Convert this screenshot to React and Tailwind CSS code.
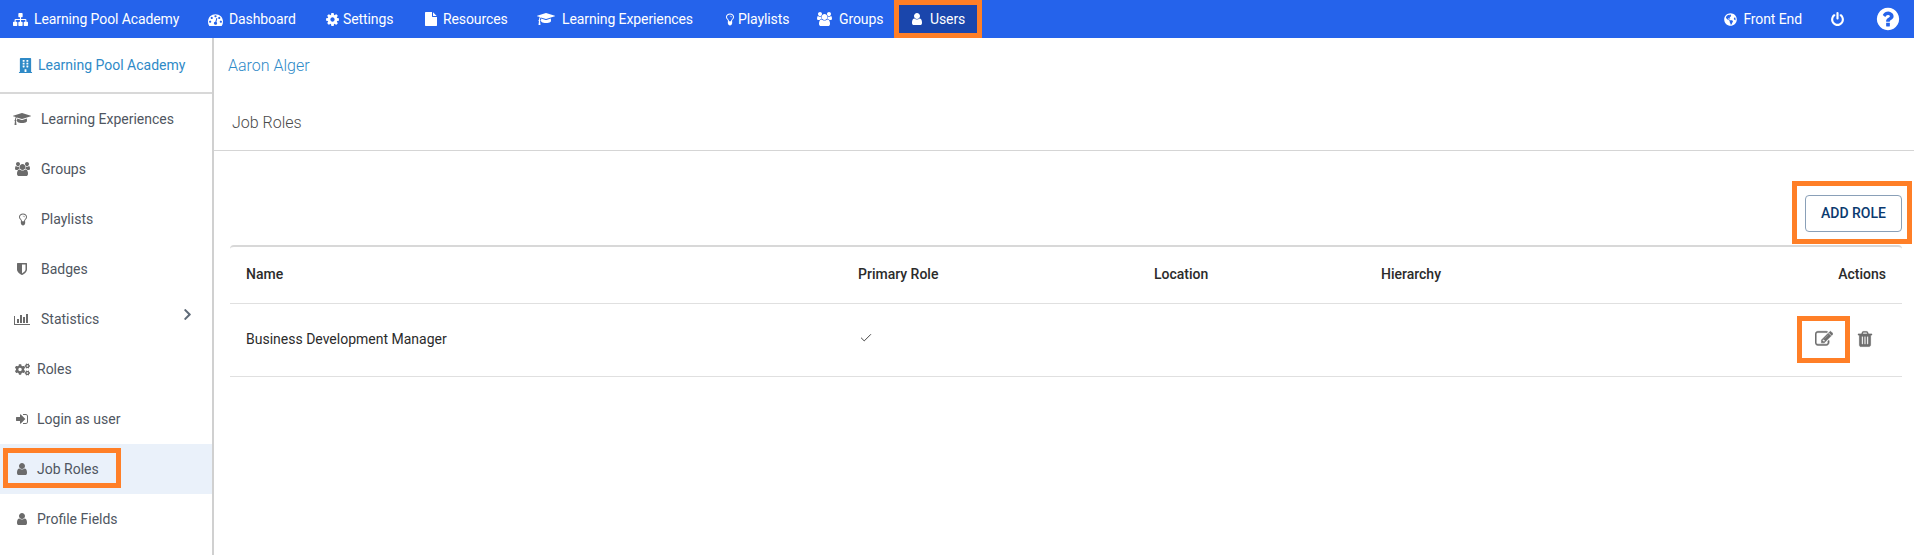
import { FaGlobeAmericas, FaBuilding, FaCogs, FaChevronRight } from "react-icons/fa";
import { LuCheck } from "react-icons/lu";

// old style solid glyphs, drawn on a 1792 tall box
const glyphs = {
  sitemap: [1792, "M1792 1248v320q0 40-28 68t-68 28h-320q-40 0-68-28t-28-68v-320q0-40 28-68t68-28h96v-192h-512v192h96q40 0 68 28t28 68v320q0 40-28 68t-68 28h-320q-40 0-68-28t-28-68v-320q0-40 28-68t68-28h96v-192h-512v192h96q40 0 68 28t28 68v320q0 40-28 68t-68 28h-320q-40 0-68-28t-28-68v-320q0-40 28-68t68-28h96v-192q0-52 38-90t90-38h512v-192h-96q-40 0-68-28t-28-68v-320q0-40 28-68t68-28h320q40 0 68 28t28 68v320q0 40-28 68t-68 28h-96v192h512q52 0 90 38t38 90v192h96q40 0 68 28t28 68z"],
  dashboard: [1792, "M384 1152q0-53-37.5-90.5t-90.5-37.5-90.5 37.5-37.5 90.5 37.5 90.5 90.5 37.5 90.5-37.5 37.5-90.5zm192-448q0-53-37.5-90.5t-90.5-37.5-90.5 37.5-37.5 90.5 37.5 90.5 90.5 37.5 90.5-37.5 37.5-90.5zm428 481l101-382q6-26-7.5-48.5t-38.5-29.5-48 6.5-30 39.5l-101 382q-60 5-107 43.5t-63 98.5q-20 77 20 146t117 89 146-20 89-117q16-60-6-117t-72-91zm660-33q0-53-37.5-90.5t-90.5-37.5-90.5 37.5-37.5 90.5 37.5 90.5 90.5 37.5 90.5-37.5 37.5-90.5zm-640-640q0-53-37.5-90.5t-90.5-37.5-90.5 37.5-37.5 90.5 37.5 90.5 90.5 37.5 90.5-37.5 37.5-90.5zm448 192q0-53-37.5-90.5t-90.5-37.5-90.5 37.5-37.5 90.5 37.5 90.5 90.5 37.5 90.5-37.5 37.5-90.5zm320 448q0 261-141 483-19 29-54 29h-1402q-35 0-54-29-141-221-141-483 0-182 71-348t191-286 286-191 348-71 348 71 286 191 191 286 71 348z"],
  cog: [1792, "M1152 896q0-106-75-181t-181-75-181 75-75 181 75 181 181 75 181-75 75-181zm512-109v222q0 12-8 23t-20 13l-185 28q-19 54-39 91 35 50 107 138 10 12 10 25t-9 23q-27 37-99 108t-94 71q-12 0-26-9l-138-108q-44 23-91 38-16 136-29 186-7 28-36 28h-222q-14 0-24.5-8.5t-11.5-21.5l-28-184q-49-16-90-37l-141 107q-10 9-25 9-14 0-25-11-126-114-165-168-7-10-7-23 0-12 8-23 15-21 51-66.5t54-70.5q-27-50-41-99l-183-27q-13-2-21-12.5t-8-23.5v-222q0-12 8-23t19-13l186-28q14-46 39-92-40-57-107-138-10-12-10-24 0-10 9-23 26-36 98.5-107.5t94.5-71.5q13 0 26 10l138 107q44-23 91-38 16-136 29-186 7-28 36-28h222q14 0 24.5 8.5t11.5 21.5l28 184q49 16 90 37l142-107q9-9 24-9 13 0 25 10 129 119 165 170 7 8 7 22 0 12-8 23-15 21-51 66.5t-54 70.5q26 50 41 98l183 28q13 2 21 12.5t8 23.5z"],
  file: [1792, "M1152 512v-472q22 14 36 28l408 408q14 14 28 36h-472zm-128 32q0 40 28 68t68 28h544v1056q0 40-28 68t-68 28h-1344q-40 0-68-28t-28-68v-1600q0-40 28-68t68-28h800v544z"],
  cap: [2304, "M1774 836l18 316q4 69-82 128t-235 93.5-323 34.5-323-34.5-235-93.5-82-128l18-316 574 181q22 7 48 7t48-7zm530-324q0 23-22 31l-1120 352q-4 1-10 1t-10-1l-652-206q-43 34-71 111.5t-34 178.5q63 36 63 109 0 69-58 107l58 433q2 14-8 25-9 11-24 11h-192q-15 0-24-11-10-11-8-25l58-433q-58-38-58-107 0-73 65-111 11-207 98-330l-333-104q-22-8-22-31t22-31l1120-352q4-1 10-1t10 1l1120 352q22 8 22 31z"],
  bulb: [1792, "M1248 640q0 13-9.5 22.5t-22.5 9.5-22.5-9.5-9.5-22.5q0-46-54-71t-106-25q-13 0-22.5-9.5t-9.5-22.5 9.5-22.5 22.5-9.5q50 0 99.5 16t87 54 37.5 90zm160 0q0-72-34.5-134t-90-101.5-123-62-136.5-22.5-136.5 22.5-123 62-90 101.5-34.5 134q0 101 68 180 10 11 30.5 33t30.5 33q128 153 141 298h228q13-145 141-298 10-11 30.5-33t30.5-33q68-79 68-180zm128 0q0 155-103 268-45 49-74.5 87t-59.5 95.5-34 107.5q47 28 47 82 0 37-25 64 25 27 25 64 0 52-45 81 13 23 13 47 0 46-31.5 71t-77.5 25q-20 44-60 70t-87 26-87-26-60-70q-46 0-77.5-25t-31.5-71q0-24 13-47-45-29-45-81 0-37 25-64-25-27-25-64 0-54 47-82-4-50-34-107.5t-59.5-95.5-74.5-87q-103-113-103-268 0-99 44.5-184.5t117-142 164-89 186.5-32.5 186.5 32.5 164 89 117 142 44.5 184.5z"],
  users: [1920, "M593 896q-162 5-265 128h-134q-82 0-138-40.5t-56-118.5q0-353 124-353 6 0 43.5 21t97.5 42.5 119 21.5q67 0 133-23-5 37-5 66 0 139 81 256zm1071 637q0 120-73 189.5t-194 69.5h-874q-121 0-194-69.5t-73-189.5q0-53 3.5-103.5t14-109 26.5-108.5 43-97.5 62-81 85.5-53.5 111.5-20q10 0 43 21.5t73 48 107 48 135 21.5 135-21.5 107-48 73-48 43-21.5q61 0 111.5 20t85.5 53.5 62 81 43 97.5 26.5 108.5 14 109 3.5 103.5zm-1024-1277q0 106-75 181t-181 75-181-75-75-181 75-181 181-75 181 75 75 181zm704 384q0 159-112.5 271.5t-271.5 112.5-271.5-112.5-112.5-271.5 112.5-271.5 271.5-112.5 271.5 112.5 112.5 271.5zm576 225q0 78-56 118.5t-138 40.5h-134q-103-123-265-128 81-117 81-256 0-29-5-66 66 23 133 23 59 0 119-21.5t97.5-42.5 43.5-21q124 0 124 353zm-128-609q0 106-75 181t-181 75-181-75-75-181 75-181 181-75 181 75 75 181z"],
  user: [1792, "M1536 1399q0 109-62.5 187t-150.5 78h-854q-88 0-150.5-78t-62.5-187q0-85 8.5-160.5t31.5-152 58.5-131 94-89 134.5-34.5q131 128 313 128t313-128q76 0 134.5 34.5t94 89 58.5 131 31.5 152 8.5 160.5zm-256-887q0 159-112.5 271.5t-271.5 112.5-271.5-112.5-112.5-271.5 112.5-271.5 271.5-112.5 271.5 112.5 112.5 271.5z"],
  shield: [1792, "M1344 960v-640h-448v1137q119-63 213-137 235-184 235-360zm192-768v768q0 86-33.5 170.5t-83 150-118 127.5-126.5 103-121 77.5-89.5 49.5-42.5 20q-12 6-26 6t-26-6q-16-7-42.5-20t-89.5-49.5-121-77.5-126.5-103-118-127.5-83-150-33.5-170.5v-768q0-26 19-45t45-19h1152q26 0 45 19t19 45z"],
  chart: [2048, "M640 896v512h-256v-512h256zm384-512v1024h-256v-1024h256zm1024 1152v128h-2048v-1152h128v1024h1920zm-640-896v768h-256v-768h256zm384-384v1152h-256v-1152h256z"],
  signin: [1792, "M1312 896q0 26-19 45l-544 544q-19 19-45 19t-45-19-19-45v-288h-448q-26 0-45-19t-19-45v-384q0-26 19-45t45-19h448v-288q0-26 19-45t45-19 45 19l544 544q19 19 19 45zm352-352v704q0 119-84.5 203.5t-203.5 84.5h-320q-13 0-22.5-9.5t-9.5-22.5q0-4-1-20t-.5-26.5 3-23.5 10-19.5 20.5-6.5h320q66 0 113-47t47-113v-704q0-66-47-113t-113-47h-312l-11.5-1-11.5-3-8-5.5-7-9-2-13.5q0-4-1-20t-.5-26.5 3-23.5 10-19.5 20.5-6.5h320q119 0 203.5 84.5t84.5 203.5z"],
  edit: [1792, "M888 1184l116-116-152-152-116 116v56h96v96h56zm440-720q-16-16-33 1l-350 350q-17 17-1 33t33-1l350-350q17-17 1-33zm80 594v190q0 119-84.5 203.5t-203.5 84.5h-832q-119 0-203.5-84.5t-84.5-203.5v-832q0-119 84.5-203.5t203.5-84.5h832q63 0 117 25 15 7 18 23 3 17-9 29l-49 49q-14 14-32 8-23-6-45-6h-832q-66 0-113 47t-47 113v832q0 66 47 113t113 47h832q66 0 113-47t47-113v-126q0-13 9-22l64-64q15-15 35-7t20 29zm-96-738l288 288-672 672h-288v-288zm444 132l-92 92-288-288 92-92q28-28 68-28t68 28l152 152q28 28 28 68t-28 68z"],
  trash: [1792, "M704 1376v-704q0-14-9-23t-23-9h-64q-14 0-23 9t-9 23v704q0 14 9 23t23 9h64q14 0 23-9t9-23zm256 0v-704q0-14-9-23t-23-9h-64q-14 0-23 9t-9 23v704q0 14 9 23t23 9h64q14 0 23-9t9-23zm256 0v-704q0-14-9-23t-23-9h-64q-14 0-23 9t-9 23v704q0 14 9 23t23 9h64q14 0 23-9t9-23zm-544-992h448l-48-117q-7-9-17-11h-317q-10 2-17 11zm928 32v64q0 14-9 23t-23 9h-96v948q0 83-47 143.5t-113 60.5h-832q-66 0-113-58.5t-47-141.5v-952h-96q-14 0-23-9t-9-23v-64q0-14 9-23t23-9h309l70-167q15-37 54-63t79-26h320q40 0 79 26t54 63l70 167h309q14 0 23 9t9 23z"],
  power: [1792, "M1664 896q0 156-61 298t-164 245-245 164-298 61-298-61-245-164-164-245-61-298q0-182 80.5-343t226.5-270q43-32 95.5-25t83.5 50q32 42 24.5 94.5t-49.5 84.5q-98 74-151.5 181t-53.5 228q0 104 40.5 198.5t109.5 163.5 163.5 109.5 198.5 40.5 198.5-40.5 163.5-109.5 109.5-163.5 40.5-198.5q0-121-53.5-228t-151.5-181q-42-32-49.5-84.5t24.5-94.5q31-43 84-50t95 25q146 109 226.5 270t80.5 343zm-640-768v640q0 52-38 90t-90 38-90-38-38-90v-640q0-52 38-90t90-38 90 38 38 90z"],
  question: [1792, "M1024 1376v-192q0-14-9-23t-23-9h-192q-14 0-23 9t-9 23v192q0 14 9 23t23 9h192q14 0 23-9t9-23zm256-672q0-88-55.5-163t-138.5-116-170-41q-243 0-371 213-15 24 8 42l132 100q7 6 19 6 16 0 25-12 53-68 86-92 34-24 86-24 48 0 85.5 26t37.5 59q0 38-20 61t-68 45q-63 28-115.5 86.5t-52.5 125.5v36q0 14 9 23t23 9h192q14 0 23-9t9-23q0-19 21.5-49.5t54.5-49.5q32-18 49-28.5t46-35 44.5-48 28-60.5 12.5-81zm384 192q0 209-103 385.5t-279.5 279.5-385.5 103-385.5-103-279.5-279.5-103-385.5 103-385.5 279.5-279.5 385.5-103 385.5 103 279.5 279.5 103 385.5z"],
};

// size is the glyph height in px
const Glyph = ({ name, size = 14, bold = 0, className = "" }) => {
  const [w, d] = glyphs[name];
  return (
    <svg
      viewBox={`0 0 ${w} 1792`}
      width={(w / 1792) * size}
      height={size}
      fill="currentColor"
      stroke="currentColor"
      strokeWidth={bold}
      className={`shrink-0 ${className}`}
    >
      <path d={d} />
    </svg>
  );
};

const topItems = [
  { icon: "sitemap", label: "Learning Pool Academy", box: "w-[195px]", size: 15, ml: "ml-[6px]" },
  { icon: "dashboard", label: "Dashboard", box: "w-[117px]", size: 15, ml: "ml-[6px]" },
  { icon: "cog", label: "Settings", box: "w-[99px]", size: 15, ml: "ml-[3px]" },
  { icon: "file", label: "Resources", box: "w-[113px]", size: 14, ml: "ml-[5px]" },
  { icon: "cap", label: "Learning Experiences", box: "w-[185px]", size: 14, ml: "ml-[7px]" },
  { icon: "bulb", label: "Playlists", box: "w-[95px]", size: 14, ml: "ml-[2px]" },
  { icon: "users", label: "Groups", box: "w-[78px]", size: 14, ml: "ml-[7px]" },
];

const sideItems = [
  { icon: "cap", label: "Learning Experiences", ml: "ml-[11px]" },
  { icon: "users", label: "Groups", ml: "ml-[11px]" },
  { icon: "bulb", label: "Playlists", ml: "ml-[11px]" },
  { icon: "shield", label: "Badges", ml: "ml-[11px]" },
  { icon: "chart", label: "Statistics", ml: "ml-[11px]", arrow: true },
  { cogs: true, label: "Roles", ml: "ml-[7px]" },
  { icon: "signin", label: "Login as user", ml: "ml-[7px]" },
  { icon: "user", label: "Job Roles", ml: "ml-[7px]", active: true },
  { icon: "user", label: "Profile Fields", ml: "ml-[7px]" },
];

const SideRow = ({ item }) => (
  <div className={`relative flex h-[50px] items-center text-[14px] text-[#4f5661] ${item.active ? "bg-[#eaf1fa]" : ""}`}>
    {item.active && (
      <div className="absolute left-[3px] top-[4px] h-[40px] w-[118px] border-[5px] border-[#ff7f27]" />
    )}
    <div className="flex w-[30px] shrink-0 justify-center pl-[14px] text-[#6b6b6b]">
      {item.cogs ? <FaCogs size={15} className="shrink-0" /> : <Glyph name={item.icon} />}
    </div>
    <span className={item.ml}>{item.label}</span>
    {item.arrow && (
      <FaChevronRight size={13} className="absolute left-[181px] top-[14px] text-[#5f6b78]" />
    )}
  </div>
);

const App = () => {
  return (
    <div className="flex h-[555px] flex-col overflow-hidden bg-white font-['Roboto',sans-serif]">
      <header className="flex h-[38px] shrink-0 items-center whitespace-nowrap bg-[#2563eb] pl-[13px] text-[14px] tracking-[-0.1px] text-white">
        {topItems.map((item) => (
          <div key={item.label} className={`flex items-center ${item.box}`}>
            <Glyph name={item.icon} size={item.size} />
            <span className={item.ml}>{item.label}</span>
          </div>
        ))}
        <div className="ml-[-1px] flex h-[38px] w-[88px] items-center border-[5px] border-[#ff7f27] bg-[#1a46ac] pl-[11px]">
          <Glyph name="user" />
          <span className="ml-[6px]">Users</span>
        </div>
        <div className="ml-auto flex items-center">
          <FaGlobeAmericas size={13} />
          <span className="ml-[6px]">Front End</span>
          <Glyph name="power" size={15} className="ml-[28px]" />
          <Glyph name="question" size={26} className="ml-[30px] mr-[13px]" />
        </div>
      </header>

      <div className="flex min-h-0 flex-1">
        <aside className="w-[214px] shrink-0 border-r-2 border-[#d0d0d0]">
          <div className="flex h-[56px] items-center border-b-2 border-[#d8d8d8] pl-[18px] text-[14px] text-[#2f8ac7]">
            <FaBuilding size={15} />
            <span className="ml-[5px]">Learning Pool Academy</span>
          </div>
          {sideItems.map((item) => (
            <SideRow key={item.label} item={item} />
          ))}
        </aside>

        <main className="min-w-0 flex-1">
          <div className="flex h-[55px] items-center pl-[14px] text-[16px] font-light text-[#2f8ac7]">
            Aaron Alger
          </div>
          <div className="flex h-[58px] items-center border-b border-[#d5d5d5] pl-[18px] pt-[2px] text-[16px] font-light text-[#4a4a4a]">
            Job Roles
          </div>

          <div className="flex justify-end pr-[2px] pt-[30px]">
            <div className="border-[5px] border-[#ff7f27] pb-[7px] pl-[8px] pr-[5px] pt-[9px]">
              <button className="flex h-[37px] w-[97px] items-center justify-center rounded-[4px] border border-[#8aa0b8] pb-[1px] text-[14px] font-medium text-[#0b3a6f]">
                ADD ROLE
              </button>
            </div>
          </div>

          <div className="ml-[16px] mr-[12px] mt-[1px] rounded-tl-[4px] rounded-tr-[4px] border-t-2 border-[#d8d8d8] text-[14px] text-[#2b2b2b]">
            <div className="grid h-[57px] grid-cols-[628px_296px_227px_1fr] items-center border-b border-[#e0e0e0] pb-[1px] font-medium">
              <span className="pl-[16px]">Name</span>
              <span>Primary Role</span>
              <span>Location</span>
              <div className="flex items-center justify-between pr-[16px]">
                <span>Hierarchy</span>
                <span>Actions</span>
              </div>
            </div>
            <div className="grid h-[73px] grid-cols-[628px_296px_227px_1fr] items-center border-b border-[#e0e0e0] pb-[2px]">
              <span className="pl-[16px]">Business Development Manager</span>
              <LuCheck size={14} strokeWidth={1.5} className="mb-[2px] ml-[1px]" />
              <span />
              <div className="flex items-center justify-end pr-[28px] text-[#6e6e6e]">
                <div className="mr-[6px] flex h-[47px] w-[53px] items-center justify-center border-[5px] border-[#ff7f27]">
                  <Glyph name="edit" size={18} bold={50} />
                </div>
                <Glyph name="trash" size={18} bold={20} />
              </div>
            </div>
          </div>
        </main>
      </div>
    </div>
  );
};

export default App;
